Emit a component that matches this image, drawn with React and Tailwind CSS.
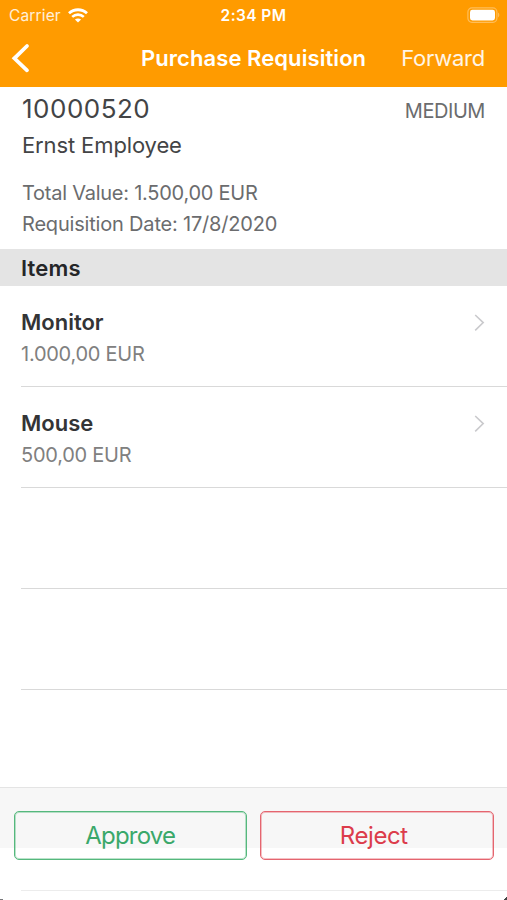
const items = [
  { name: "Monitor", price: "1.000,00 EUR" },
  { name: "Mouse", price: "500,00 EUR" },
];

function WifiIcon() {
  return (
    <svg width="20" height="15" viewBox="0 0 20 15" fill="none" stroke="white">
      <path d="M1 5.2C6 .6 14 .6 19 5.2" strokeWidth="2.8" />
      <path d="M4.2 8.9c3.3-3 8.3-3 11.6 0" strokeWidth="2.6" />
      <path d="M10 14.6l-3.1-3.1c1.7-1.5 4.5-1.5 6.2 0z" fill="white" stroke="none" />
    </svg>
  );
}

function BatteryIcon() {
  return (
    <svg width="33" height="17" viewBox="0 0 33 17" fill="none">
      <rect x="0.9" y="0.9" width="29" height="14.4" rx="4" stroke="white" strokeOpacity="0.35" strokeWidth="1.2" />
      <rect x="3" y="2.8" width="25" height="10.6" rx="2.4" fill="white" />
      <path d="M31.2 5.6c1.5.8 1.5 4 0 4.8z" fill="white" fillOpacity="0.4" />
    </svg>
  );
}

function StatusBar() {
  return (
    <div className="grid h-[31px] grid-cols-3 items-center px-[7px] text-[15.5px] leading-[31px]">
      <div className="flex items-center gap-[7px] pl-0.5 text-white/85">
        <span className="tracking-[0.15px]">Carrier</span>
        <WifiIcon />
      </div>
      <span className="text-center font-semibold tracking-[0.4px]">2:34 PM</span>
      <div className="flex justify-end">
        <BatteryIcon />
      </div>
    </div>
  );
}

function NavBar() {
  return (
    <div className="flex h-[54px] items-center pl-[11px] pr-[22px] text-[22px] leading-[54px]">
      <svg width="20" height="30" viewBox="0 0 20 30" fill="none" stroke="white" strokeWidth="3.8">
        <path d="M16 3L3.4 15.3l12.6 12" strokeLinecap="round" />
      </svg>
      <h1 className="ml-[110px] whitespace-nowrap font-semibold tracking-[0.07px]">Purchase Requisition</h1>
      <button className="ml-auto tracking-[-0.25px] text-white/90">Forward</button>
    </div>
  );
}

function ItemRow({ item }) {
  return (
    <li className="ml-[21px] flex h-[101px] items-start justify-between border-b border-[#d9d9d9] pr-[22px] pt-5">
      {item && (
        <>
          <div className="whitespace-nowrap">
            <div className="text-[22px] font-semibold leading-8 text-[#333436]">{item.name}</div>
            <div className="text-[20px] leading-8 tracking-[-0.25px] text-[#808080]">{item.price}</div>
          </div>
          <svg className="mt-2" width="12" height="18" viewBox="0 0 12 18" fill="none" stroke="#cacacd" strokeWidth="1.6">
            <path d="M2.2 1l8 7.6-8 7.8" />
          </svg>
        </>
      )}
    </li>
  );
}

export default function App() {
  return (
    <div className="relative flex h-[900px] w-[507px] flex-col overflow-hidden bg-white font-['Inter','Liberation_Sans',sans-serif]">
      <header className="h-[87px] shrink-0 bg-[#ff9b00] text-white">
        <StatusBar />
        <NavBar />
      </header>

      <section className="flex h-[162px] shrink-0 justify-between whitespace-nowrap pl-[22px] pr-[22px] pt-1 text-[20px] leading-[31px] text-[#6b6c6e]">
        <div>
          <div className="text-[26px] leading-9 tracking-[0.5px] text-[#434446]">10000520</div>
          <div className="mb-3.5 text-[22px] leading-[37px] tracking-[-0.12px] text-[#434446]">Ernst Employee</div>
          <div className="tracking-[-0.25px]">Total Value: 1.500,00 EUR</div>
          <div className="tracking-[-0.19px]">Requisition Date: 17/8/2020</div>
        </div>
        <div className="pt-[5px] tracking-[-0.45px]">MEDIUM</div>
      </section>

      <h2 className="h-[37px] shrink-0 bg-[#e4e4e4] pl-[21px] text-[22px] font-semibold leading-[38px] tracking-[0.2px] text-[#252628]">
        Items
      </h2>

      <ul className="h-[501px] shrink-0 overflow-hidden">
        {items.map((item) => (
          <ItemRow key={item.name} item={item} />
        ))}
        <ItemRow />
        <ItemRow />
      </ul>

      <footer className="h-[113px] shrink-0 bg-[linear-gradient(#f7f7f7_61px,#ffffff_61px)]">
        <div className="grid h-[103px] grid-cols-2 items-start gap-[13px] border-t border-[#e4e4e4] px-[13.5px] pt-[23px] text-[24px]">
          <button className="h-[49px] rounded-[5px] border border-[#55b87d] tracking-[-0.8px] text-[#3aa86a] inset-ring inset-ring-[#55b87d]/40">
            Approve
          </button>
          <button className="h-[49px] rounded-[5px] border border-[#e5656f] pr-1.5 tracking-[-0.4px] text-[#dc3c4b] inset-ring inset-ring-[#e5656f]/40">
            Reject
          </button>
        </div>
        <div className="ml-[21px] border-t border-[#ececec]" />
      </footer>

      {/* dark screen corners */}
      <div className="absolute bottom-0 left-0 h-px w-[3px] bg-[#77777a]" />
      <div className="absolute bottom-0 right-0 size-[3px] bg-[linear-gradient(135deg,transparent_50%,#444_50%)]" />
    </div>
  );
}
